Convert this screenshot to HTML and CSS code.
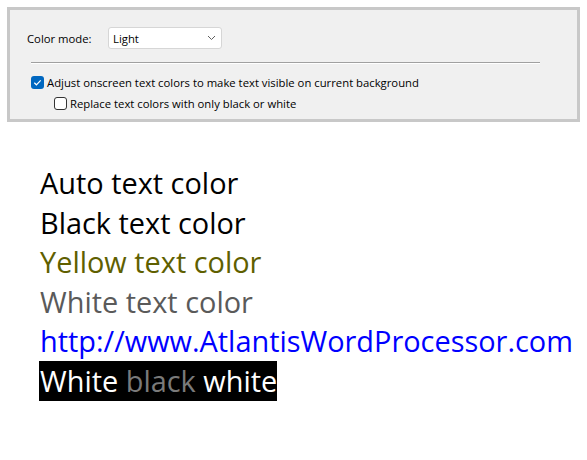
FILE: index.html
```html
<!DOCTYPE html>
<html>
<head>
<meta charset="utf-8">
<link rel="stylesheet" href="styles.css">
</head>
<body>
<div class="panel">
  <div class="mode-row">
    <span class="label">Color mode:</span>
    <div class="select">
      <span>Light</span>
      <svg class="chev" width="9" height="6" viewBox="0 0 9 6"><path d="M1 1 L4.5 4.5 L8 1" fill="none" stroke="#606060" stroke-width="1"/></svg>
    </div>
  </div>
  <div class="sep"></div>
  <div class="check-row">
    <span class="box checked"><svg width="13" height="13" viewBox="0 0 13 13"><path d="M3.3 6.8 L5.4 8.8 L9.7 4.4" fill="none" stroke="#fff" stroke-width="1.2"/></svg></span>
    <span>Adjust onscreen text colors to make text visible on current background</span>
  </div>
  <div class="check-row sub">
    <span class="box"></span>
    <span>Replace text colors with only black or white</span>
  </div>
</div>
<div class="doc">
  <div class="line">Auto text color</div>
  <div class="line">Black text color</div>
  <div class="line yellow">Yellow text color</div>
  <div class="line white">White text color</div>
  <div class="line link">http://www.AtlantisWordProcessor.com</div>
  <div class="line"><span class="inv">White <span class="dim">black</span> white</span></div>
</div>
</body>
</html>
```
FILE: styles.css
```css
html, body { margin: 0; padding: 0; background: #fff; }
body { width: 587px; height: 460px; overflow: hidden; font-family: "Open Sans", "Noto Sans", sans-serif; }
.panel {
  margin: 7px 7px 0 7px;
  height: 109px;
  border: 3px solid #c8c8c8;
  background: #f0f0f0;
  font-size: 11.3px;
  color: #000;
  box-sizing: content-box;
  width: 567px;
}
.mode-row { display: flex; align-items: center; padding: 17px 0 0 17px; height: 22px; }
.label { width: 81px; }
.select {
  width: 107px; height: 20px; box-sizing: content-box;
  background: #fff; border: 1px solid #d6d6d6; border-radius: 3px;
  display: flex; align-items: center; justify-content: space-between;
  padding: 0 5px 0 0;
}
.select span { padding-left: 4px; }
.sep { margin: 13px 0 0 21px; width: 509px; height: 1px; background: #a0a0a0; border-bottom: 1px solid #fff; }
.check-row { display: flex; align-items: center; height: 21px; margin-top: 8px; padding-left: 21px; gap: 3px; }
.check-row.sub { margin-top: 0; padding-left: 44px; }
.box { width: 11px; height: 11px; border: 1px solid #333; border-radius: 3px; background: #fff; display: inline-flex; }
.box.checked { background: #0067c0; width: 13px; height: 13px; border: 0; }
.doc { padding: 41px 0 0 40px; font-size: 28.9px; }
.line { height: 39.6px; line-height: 39.6px; white-space: nowrap; }
.yellow { color: #5f5f00; }
.white { color: #5a5a5a; }
.link { color: #0000ff; }
.inv { background: #000; color: #fff; display: inline-block; margin-left: -1px; padding-left: 1px; padding-right: 0; }
.dim { color: #7a7a7a; }
```
